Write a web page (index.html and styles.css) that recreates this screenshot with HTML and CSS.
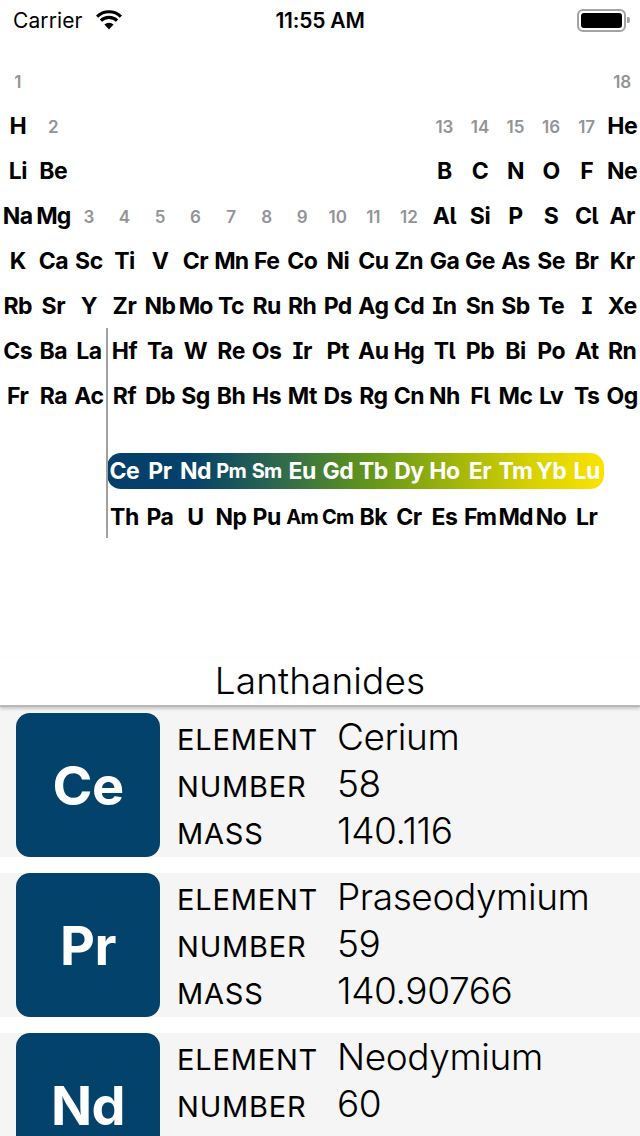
FILE: index.html
```html
<!DOCTYPE html>
<html lang="en">
<head>
  <meta charset="UTF-8">
  <meta name="viewport" content="width=device-width, initial-scale=1.0">
  <title>Elements</title>
  <link rel="stylesheet" href="styles.css">
</head>
<body>
  <div class="status-bar">
    <div class="carrier">
      Carrier
      <svg class="wifi" width="28" height="20" viewBox="0 0 28 20">
        <path d="M14 19.5 L9.4 14.6 A6.6 6.6 0 0 1 18.6 14.6 Z" fill="#000"/>
        <path d="M5.9 10.6 A11.6 11.6 0 0 1 22.1 10.6" stroke="#000" stroke-width="3.2" fill="none"/>
        <path d="M2.1 6.6 A17 17 0 0 1 25.9 6.6" stroke="#000" stroke-width="3.2" fill="none"/>
      </svg>
    </div>
    <div class="clock">11:55 AM</div>
    <div class="battery">
      <div class="battery-body"><div class="battery-level"></div></div>
      <div class="battery-cap"></div>
    </div>
  </div>

  <div class="table">
    <div class="row">
      <div class="num">1</div><div class="span16"></div><div class="num">18</div>
    </div>
    <div class="row">
      <div class="el">H</div><div class="num">2</div><div class="span10"></div>
      <div class="num">13</div><div class="num">14</div><div class="num">15</div><div class="num">16</div><div class="num">17</div>
      <div class="el">He</div>
    </div>
    <div class="row">
      <div class="el">Li</div><div class="el">Be</div><div class="span10"></div>
      <div class="el">B</div><div class="el">C</div><div class="el">N</div><div class="el">O</div><div class="el">F</div><div class="el">Ne</div>
    </div>
    <div class="row">
      <div class="el">Na</div><div class="el wide">Mg</div>
      <div class="num">3</div><div class="num">4</div><div class="num">5</div><div class="num">6</div><div class="num">7</div>
      <div class="num">8</div><div class="num">9</div><div class="num">10</div><div class="num">11</div><div class="num">12</div>
      <div class="el">Al</div><div class="el">Si</div><div class="el">P</div><div class="el">S</div><div class="el">Cl</div><div class="el">Ar</div>
    </div>
    <div class="row">
      <div class="el">K</div><div class="el">Ca</div><div class="el">Sc</div><div class="el">Ti</div><div class="el">V</div><div class="el">Cr</div>
      <div class="el wide">Mn</div><div class="el">Fe</div><div class="el">Co</div><div class="el">Ni</div><div class="el">Cu</div><div class="el">Zn</div>
      <div class="el">Ga</div><div class="el">Ge</div><div class="el">As</div><div class="el">Se</div><div class="el">Br</div><div class="el">Kr</div>
    </div>
    <div class="row">
      <div class="el">Rb</div><div class="el">Sr</div><div class="el">Y</div><div class="el">Zr</div><div class="el">Nb</div><div class="el wide">Mo</div>
      <div class="el">Tc</div><div class="el">Ru</div><div class="el">Rh</div><div class="el">Pd</div><div class="el">Ag</div><div class="el">Cd</div>
      <div class="el">In</div><div class="el">Sn</div><div class="el">Sb</div><div class="el">Te</div><div class="el">I</div><div class="el">Xe</div>
    </div>
    <div class="row">
      <div class="el">Cs</div><div class="el">Ba</div><div class="el">La</div><div class="el">Hf</div><div class="el">Ta</div><div class="el">W</div>
      <div class="el">Re</div><div class="el">Os</div><div class="el">Ir</div><div class="el">Pt</div><div class="el">Au</div><div class="el">Hg</div>
      <div class="el">Tl</div><div class="el">Pb</div><div class="el">Bi</div><div class="el">Po</div><div class="el">At</div><div class="el">Rn</div>
    </div>
    <div class="row">
      <div class="el">Fr</div><div class="el">Ra</div><div class="el">Ac</div><div class="el">Rf</div><div class="el">Db</div><div class="el">Sg</div>
      <div class="el">Bh</div><div class="el">Hs</div><div class="el">Mt</div><div class="el">Ds</div><div class="el">Rg</div><div class="el">Cn</div>
      <div class="el">Nh</div><div class="el">Fl</div><div class="el">Mc</div><div class="el">Lv</div><div class="el">Ts</div><div class="el">Og</div>
    </div>

    <div class="f-block">
      <div class="f-row">
        <div class="f-series lanthanides">
          <div class="el">Ce</div><div class="el">Pr</div><div class="el">Nd</div><div class="el small">Pm</div><div class="el small">Sm</div>
          <div class="el">Eu</div><div class="el">Gd</div><div class="el">Tb</div><div class="el">Dy</div><div class="el">Ho</div>
          <div class="el">Er</div><div class="el">Tm</div><div class="el">Yb</div><div class="el">Lu</div>
        </div>
      </div>
      <div class="f-row">
        <div class="f-series">
          <div class="el">Th</div><div class="el">Pa</div><div class="el">U</div><div class="el">Np</div><div class="el">Pu</div>
          <div class="el small">Am</div><div class="el small">Cm</div><div class="el">Bk</div><div class="el">Cr</div><div class="el">Es</div>
          <div class="el wide">Fm</div><div class="el wide">Md</div><div class="el">No</div><div class="el">Lr</div>
        </div>
      </div>
    </div>

    <div class="f-line"></div>
  </div>

  <div class="series-title">Lanthanides</div>

  <div class="element-list">
    <div class="element-row first">
      <div class="symbol-box">Ce</div>
      <div class="details">
        <div class="label">ELEMENT</div><div class="value">Cerium</div>
        <div class="label">NUMBER</div><div class="value">58</div>
        <div class="label">MASS</div><div class="value">140.116</div>
      </div>
    </div>
    <div class="element-row">
      <div class="symbol-box">Pr</div>
      <div class="details">
        <div class="label">ELEMENT</div><div class="value">Praseodymium</div>
        <div class="label">NUMBER</div><div class="value">59</div>
        <div class="label">MASS</div><div class="value">140.90766</div>
      </div>
    </div>
    <div class="element-row">
      <div class="symbol-box">Nd</div>
      <div class="details">
        <div class="label">ELEMENT</div><div class="value">Neodymium</div>
        <div class="label">NUMBER</div><div class="value">60</div>
        <div class="label">MASS</div><div class="value">144.242</div>
      </div>
    </div>
  </div>
</body>
</html>
```

FILE: styles.css
```css
body {
  margin: 0;
  padding: 0;
  font-family: Inter, "Noto Sans", sans-serif;
  background-color: #ffffff;
  color: #000000;
  width: 640px;
  height: 1136px;
  overflow: hidden;
}

/* status bar */

.status-bar {
  height: 40px;
  display: grid;
  grid-template-columns: 1fr auto 1fr;
  align-items: center;
  padding: 0 13px;
  font-size: 21px;
}

.carrier {
  display: flex;
  align-items: center;
  gap: 12px;
  letter-spacing: 0.1px;
}

.wifi {
  margin-top: -1px;
}

.clock {
  font-weight: 600;
  letter-spacing: -0.2px;
}

.battery {
  justify-self: end;
  display: flex;
  align-items: center;
  gap: 1px;
  margin-right: -3px;
}

.battery-body {
  width: 41px;
  height: 15px;
  padding: 2px;
  border: 2px solid #a3a3a3;
  border-radius: 6px;
}

.battery-level {
  height: 100%;
  background-color: #000000;
  border-radius: 3px;
}

.battery-cap {
  width: 3px;
  height: 6px;
  background-color: #a3a3a3;
  border-radius: 0 2px 2px 0;
}

/* periodic table */

.table {
  position: relative;
  margin-top: 18px;
  font-feature-settings: "cv05", "cv08";
}

.row {
  display: grid;
  grid-template-columns: repeat(18, 1fr);
  height: 45px;
  align-items: center;
}

.span10 {
  grid-column: span 10;
}

.span16 {
  grid-column: span 16;
}

.el,
.num {
  text-align: center;
  white-space: nowrap;
}

.el {
  font-size: 23px;
  font-weight: 700;
  letter-spacing: -0.5px;
}

.el.wide {
  letter-spacing: -1px;
}

.el.small {
  font-size: 20px;
  letter-spacing: -0.7px;
}

.num {
  font-size: 17px;
  font-weight: 600;
  color: #939398;
  padding-top: 3px;
}

.row:first-child .num {
  padding-top: 0;
  margin-top: 2px;
}

.f-block {
  margin-top: 30px;
}

.f-row {
  display: grid;
  grid-template-columns: repeat(18, 1fr);
  height: 46px;
  align-items: center;
}

.f-series {
  grid-column: 4 / 18;
  display: grid;
  grid-template-columns: repeat(14, 1fr);
  align-items: center;
  height: 36px;
}

.lanthanides {
  color: #ffffff;
  border-radius: 14px;
  background: linear-gradient(to right, #033f6a 0%, #05416a 17%, #2f6a4c 35%, #5f941c 52%, #a8b90a 72%, #d9d200 86%, #fbe300 100%);
}

.f-line {
  position: absolute;
  left: 106px;
  top: 270px;
  width: 2px;
  height: 210px;
  background-color: #a0a0a0;
}

/* element list */

.series-title {
  margin-top: 117px;
  height: 48px;
  line-height: 48px;
  text-align: center;
  font-size: 37px;
  font-weight: 300;
  letter-spacing: 0.1px;
  border-bottom: 2px solid #b8b8b8;
  box-shadow: 0 2px 3px rgba(0, 0, 0, 0.18);
  position: relative;
}

.element-list {
  display: flex;
  flex-direction: column;
  gap: 16px;
}

.element-row {
  display: flex;
  gap: 17px;
  padding-left: 16px;
  background-color: #f5f5f5;
}

.element-row.first {
  padding-top: 6px;
}

.symbol-box {
  width: 144px;
  height: 144px;
  flex-shrink: 0;
  border-radius: 14px;
  background-color: #03426a;
  color: #ffffff;
  font-size: 54px;
  font-weight: 700;
  letter-spacing: -0.5px;
  display: flex;
  align-items: center;
  justify-content: center;
}

.details {
  display: grid;
  grid-template-columns: 160px auto;
  grid-auto-rows: 47px;
  align-items: baseline;
  padding-top: 1px;
}

.label {
  font-size: 29px;
  font-weight: 400;
  letter-spacing: 0.8px;
}

.value {
  font-size: 37px;
  font-weight: 300;
  letter-spacing: -0.4px;
}
```
